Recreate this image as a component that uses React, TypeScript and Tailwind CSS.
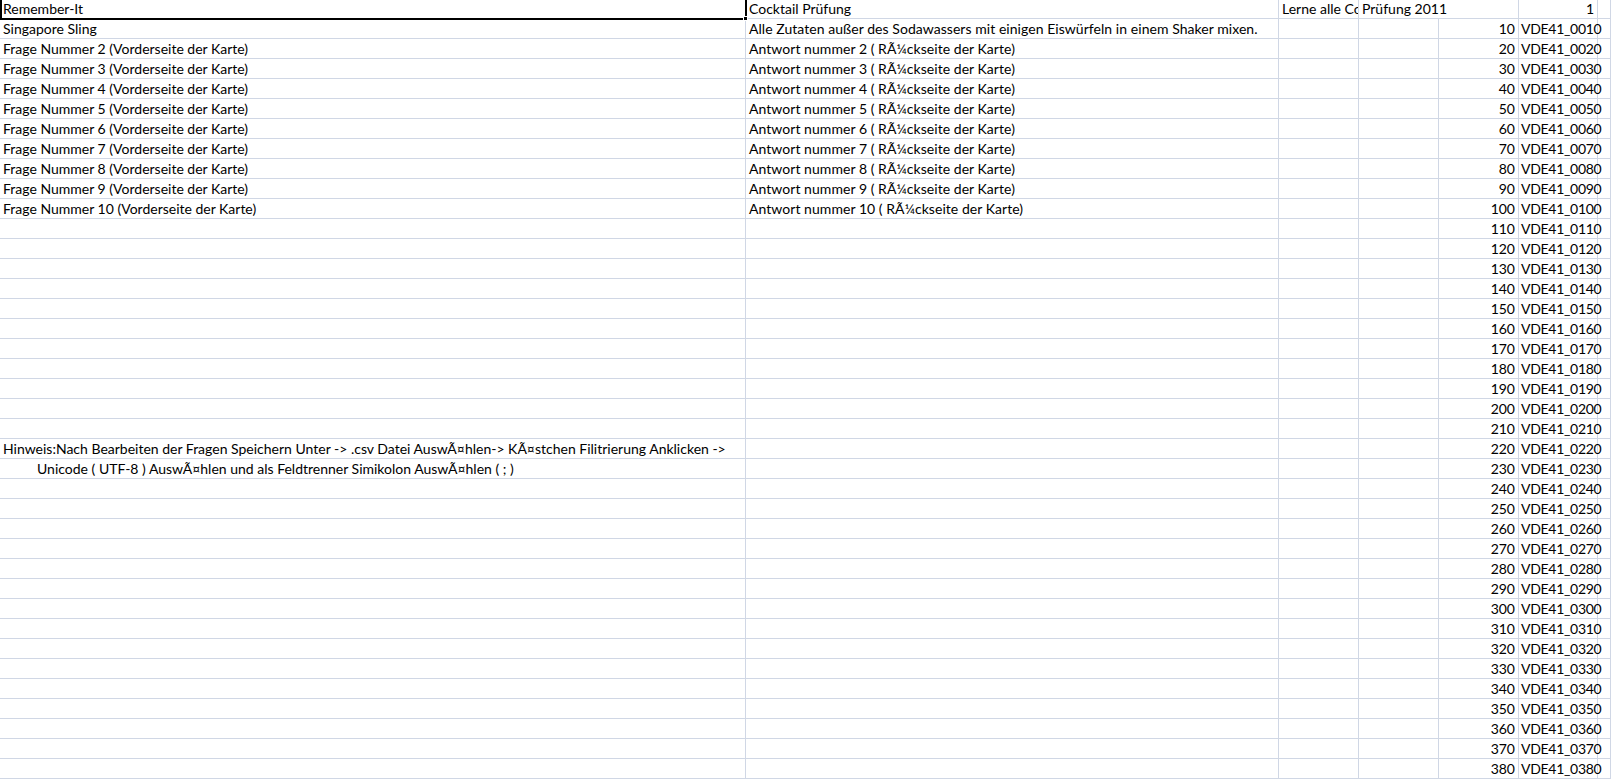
import React from "react";

const G = "border-r border-b border-[#d0d7e5]";
const cellBase = "h-[20px] px-[3px] leading-[19px] whitespace-nowrap overflow-hidden";
const cellOver = "h-[20px] pl-[2px] leading-[19px] whitespace-nowrap overflow-visible tracking-[-0.3px] relative z-10";

const COLS = "grid-cols-[746px_533px_80px_80px_80px_79px_1fr]";

function pad(n: number) {
  return n.toString().padStart(4, "0");
}

export default function App() {
  const rows: { a: string; b: string; aIndent?: boolean }[] = [];
  rows.push({ a: "Singapore Sling", b: "Alle Zutaten außer des Sodawassers mit einigen Eiswürfeln in einem Shaker mixen." });
  for (let i = 2; i <= 10; i++) {
    rows.push({
      a: `Frage Nummer ${i} (Vorderseite der Karte)`,
      b: `Antwort nummer ${i} ( RÃ¼ckseite der Karte)`,
    });
  }
  while (rows.length < 38) rows.push({ a: "", b: "" });
  rows[21] = {
    a: "Hinweis:Nach Bearbeiten der Fragen Speichern Unter -> .csv Datei AuswÃ¤hlen-> KÃ¤stchen Filitrierung Anklicken ->",
    b: "",
  };
  rows[22] = {
    a: "Unicode ( UTF-8 ) AuswÃ¤hlen und als Feldtrenner Simikolon AuswÃ¤hlen ( ; )",
    b: "",
    aIndent: true,
  };

  return (
    <div
      className="relative w-[1611px] h-[779px] overflow-hidden bg-white text-black text-[14px]"
      style={{ fontFamily: "Lato, 'Open Sans', sans-serif" }}
    >
      <div className="mt-[-1px]">
        <div className={`grid ${COLS}`}>
          <div className={`${G} ${cellBase}`}>Remember-It</div>
          <div className={`${G} ${cellBase}`}>Cocktail Prüfung</div>
          <div className={`${G} ${cellBase}`}>Lerne alle Co</div>
          <div className={`${G} ${cellBase} col-span-2`}>Prüfung 2011</div>
          <div className={`${G} ${cellBase} text-right`}>1</div>
          <div className={`${G} ${cellBase}`}></div>
        </div>
        {rows.map((r, i) => (
          <div key={i} className={`grid ${COLS}`}>
            <div className={`${G} ${cellBase} ${r.aIndent ? "pl-[37px]" : ""}`}>{r.a}</div>
            <div className={`${G} ${cellBase} tracking-[0.05px]`}>{r.b}</div>
            <div className={`${G} ${cellBase}`}></div>
            <div className={`${G} ${cellBase}`}></div>
            <div className={`${G} ${cellBase} text-right`}>{(i + 1) * 10}</div>
            <div className={`${G} ${cellOver}`}>VDE41_{pad((i + 1) * 10)}</div>
            <div className={`${G} ${cellBase}`}></div>
          </div>
        ))}
      </div>
      <div className="absolute left-0 top-[-3px] w-[747px] h-[23px] border-2 border-black pointer-events-none" />
      <div className="absolute left-[743px] top-[16px] w-[5px] h-[5px] bg-black border border-white pointer-events-none" />
    </div>
  );
}
